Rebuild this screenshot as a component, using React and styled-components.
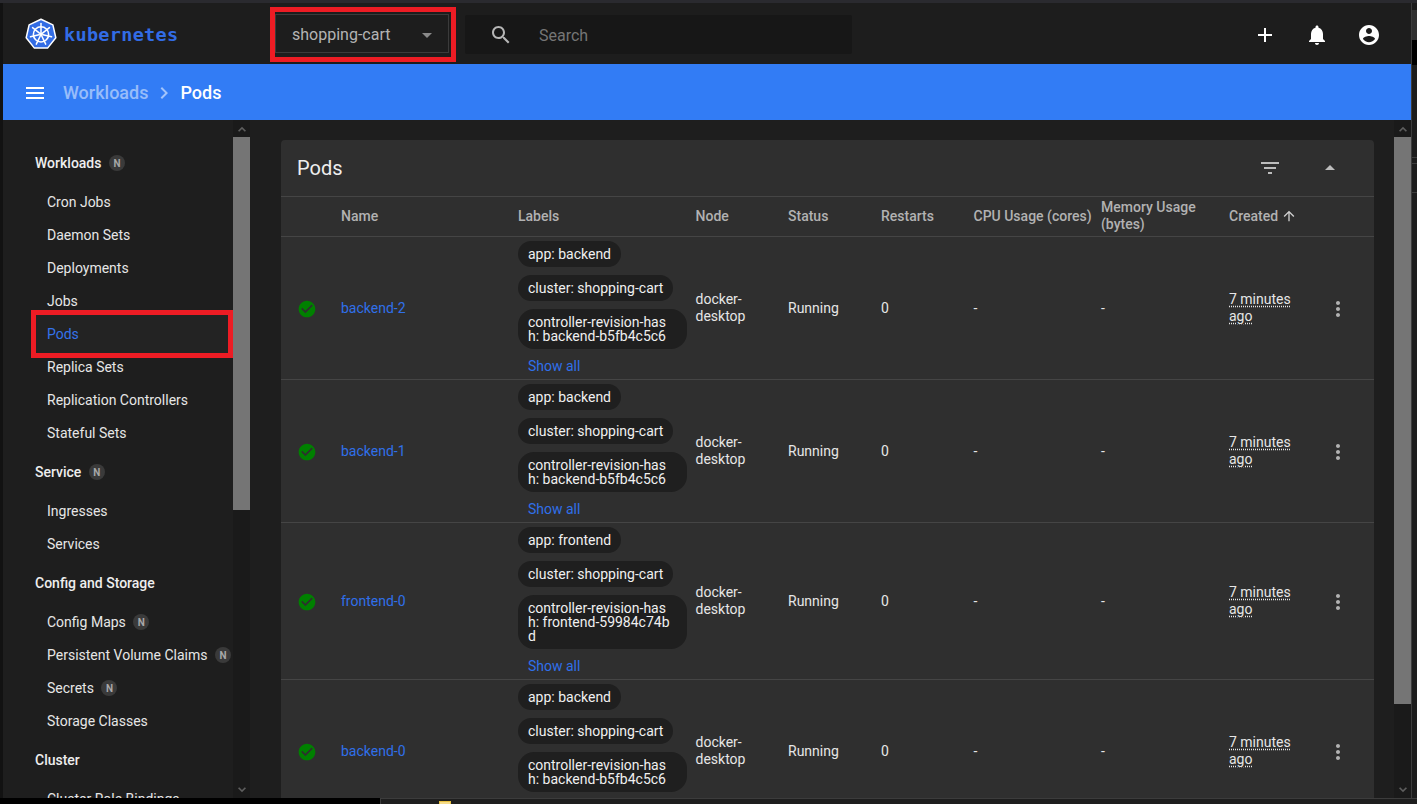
import React from "react";
import styled, { createGlobalStyle } from "styled-components";

const Global = createGlobalStyle`
  html, body { margin: 0; padding: 0; height: 100%; overflow: hidden; background: #000; }
  #root { height: 100%; }
  * { box-sizing: border-box; }
  body { font-family: Roboto, "Liberation Sans", sans-serif; font-size: 14px; }
`;

const P = {
  add: "M19 13h-6v6h-2v-6H5v-2h6V5h2v6h6v2z",
  bell: "M12 22c1.1 0 2-.9 2-2h-4c0 1.1.89 2 2 2zm6-6v-5c0-3.07-1.64-5.64-4.5-6.32V4c0-.83-.67-1.5-1.5-1.5s-1.5.67-1.5 1.5v.68C7.63 5.36 6 7.92 6 11v5l-2 2v1h16v-1l-2-2z",
  account: "M12 2C6.48 2 2 6.48 2 12s4.48 10 10 10 10-4.48 10-10S17.52 2 12 2zm0 3c1.66 0 3 1.34 3 3s-1.34 3-3 3-3-1.34-3-3 1.34-3 3-3zm0 14.2c-2.5 0-4.71-1.28-6-3.22.03-1.99 4-3.08 6-3.08 1.99 0 5.97 1.09 6 3.08-1.29 1.94-3.5 3.22-6 3.22z",
  menu: "M3 18h18v-2H3v2zm0-5h18v-2H3v2zm0-7v2h18V6H3z",
  search: "M15.5 14h-.79l-.28-.27C15.41 12.59 16 11.11 16 9.5 16 5.91 13.09 3 9.5 3S3 5.91 3 9.5 5.91 16 9.5 16c1.61 0 3.09-.59 4.23-1.57l.27.28v.79l5 4.99L20.49 19l-4.99-5zm-6 0C7.01 14 5 11.99 5 9.5S7.01 5 9.5 5 14 7.01 14 9.5 11.99 14 9.5 14z",
  chevron: "M10 6L8.59 7.41 13.17 12l-4.58 4.59L10 18l6-6z",
  filter: "M10 18h4v-2h-4v2zM3 6v2h18V6H3zm3 7h12v-2H6v2z",
  dropUp: "M7 14l5-5 5 5z",
  dropDown: "M7 10l5 5 5-5z",
  arrowUp: "M4 12l1.41 1.41L11 7.83V20h2V7.83l5.58 5.59L20 12l-8-8-8 8z",
  more: "M12 8c1.1 0 2-.9 2-2s-.9-2-2-2-2 .9-2 2 .9 2 2 2zm0 2c-1.1 0-2 .9-2 2s.9 2 2 2 2-.9 2-2-.9-2-2-2zm0 6c-1.1 0-2 .9-2 2s.9 2 2 2 2-.9 2-2-.9-2-2-2z",
  check: "M12 2C6.48 2 2 6.48 2 12s4.48 10 10 10 10-4.48 10-10S17.52 2 12 2zm-2 15l-5-5 1.41-1.41L10 14.17l7.59-7.59L19 8l-9 9z",
  scrollUp: "M6 14.5l6-6 6 6-1.8 1.8L12 12.1l-4.2 4.2z",
  scrollDown: "M6 9.5l6 6 6-6-1.8-1.8L12 11.9 7.8 7.7z",
};

const Svg = styled.svg`
  display: block;
  flex: none;
  fill: ${(p) => p.$color || "currentColor"};
`;
const Icon = ({ d, size = 24, color }) => (
  <Svg viewBox="0 0 24 24" width={size} height={size} $color={color}>
    <path d={d} />
  </Svg>
);

const polar = (r, i, n = 7) => {
  const a = (-90 + (360 / n) * i) * (Math.PI / 180);
  return [16 + r * Math.cos(a), 16.4 + r * Math.sin(a)];
};
const KubeLogo = () => (
  <svg viewBox="0 0 32 32" width="32" height="32" style={{ display: "block", flex: "none" }}>
    <polygon
      points={[0, 1, 2, 3, 4, 5, 6].map((i) => polar(15.2, i).join(",")).join(" ")}
      fill="#326ce5"
      stroke="#fff"
      strokeWidth="1.5"
      strokeLinejoin="round"
    />
    <circle cx="16" cy="16.4" r="7.6" fill="none" stroke="#fff" strokeWidth="1.6" />
    <circle cx="16" cy="16.4" r="1.8" fill="#fff" />
    {[0, 1, 2, 3, 4, 5, 6].map((i) => {
      const [x, y] = polar(10.8, i);
      const [a, b] = polar(2, i);
      return <line key={i} x1={a} y1={b} x2={x} y2={y} stroke="#fff" strokeWidth="1.5" strokeLinecap="round" />;
    })}
  </svg>
);

const Desktop = styled.div`
  height: 804px;
  width: 1417px;
  display: flex;
  flex-direction: column;
  background: #000;
  overflow: hidden;
`;
const TopStrip = styled.div`
  height: 3px;
  flex: none;
  background: #2a2a2f;
`;
const Middle = styled.div`
  display: flex;
  height: 795px;
  flex: none;
`;
const LeftEdge = styled.div`
  width: 3px;
  flex: none;
  background: #121212;
`;
const RightEdge = styled.div`
  flex: 1;
  border-left: 1px solid #3c3c3c;
  display: flex;
  flex-direction: column;
  background: #1c1c1c;
`;
const EdgeBlock = styled.div`
  height: ${(p) => p.$h}px;
  flex: none;
  background: ${(p) => p.$bg};
  border-bottom: ${(p) => (p.$line ? "1px solid #3c3c3c" : "none")};
`;
const BottomStrip = styled.div`
  flex: 1;
  display: flex;
`;
const BottomBlack = styled.div`
  width: 380px;
  background: #000;
`;
const Taskbar = styled.div`
  flex: 1;
  background: #1e1e1e;
  border-top: 1px solid #3c3c3c;
  border-left: 1px solid #3c3c3c;
  padding: 2px 0 0 58px;
`;
const TrayIcon = styled.div`
  width: 12px;
  height: 3px;
  background: #f5dc8a;
  border: 1px solid #e8c040;
  border-bottom: 0;
`;

const Window = styled.div`
  width: 1408px;
  flex: none;
  display: flex;
  flex-direction: column;
  background: #1e1e1e;
  color: #e8e8e8;
`;
const Toolbar = styled.header`
  height: 61px;
  flex: none;
  display: flex;
  align-items: center;
  background: #1d1d1d;
  padding: 2px 30px 0 22px;
`;
const Brand = styled.div`
  display: flex;
  align-items: center;
  width: 250px;
  gap: 7px;
  flex: none;
  margin-top: -1px;
`;
const Wordmark = styled.span`
  font-family: "DejaVu Sans Mono", "Liberation Mono", monospace;
  font-weight: 700;
  font-size: 18.5px;
  letter-spacing: 0.3px;
  color: #326ce5;
`;
const NamespaceSelect = styled.div`
  position: relative;
  width: 174px;
  height: 39px;
  flex: none;
  display: flex;
  align-items: center;
  justify-content: space-between;
  margin: -2px 16px 0 0;
  padding: 2px 9px 0 16px;
  border: 1px solid #3b3b3b;
  font-size: 16px;
  color: #b4b4b4;
`;
const Highlight = styled.div`
  position: absolute;
  top: ${(p) => p.$t}px;
  bottom: ${(p) => p.$b}px;
  left: ${(p) => p.$l}px;
  right: ${(p) => p.$r}px;
  border: 5px solid #ed1c24;
  background: ${(p) => p.$fill || "transparent"};
  pointer-events: none;
`;
const SearchBox = styled.div`
  width: 387px;
  height: 39px;
  flex: none;
  display: flex;
  align-items: center;
  background: #171717;
  border-radius: 2px;
  padding-left: 24px;
  color: #b6b6b6;
  font-size: 16px;
`;
const SearchHint = styled.span`
  margin-left: 26px;
  padding-top: 2px;
  color: #757575;
`;
const ToolActions = styled.div`
  margin-left: auto;
  display: flex;
  gap: 28px;
  color: #fff;
`;
const ActionBar = styled.div`
  height: 56px;
  flex: none;
  display: flex;
  align-items: center;
  background: #327cf5;
  padding: 1px 0 0 20px;
  color: #fff;
`;
const Crumb = styled.span`
  font-size: 18px;
  font-weight: 500;
  color: ${(p) => (p.$current ? "#fff" : "rgba(255,255,255,.5)")};
`;
const CrumbSep = styled.span`
  color: rgba(255, 255, 255, 0.55);
  margin: 0 4px;
`;
const MenuButton = styled.span`
  margin-right: 16px;
`;
const Body = styled.div`
  flex: 1;
  min-height: 0;
  display: flex;
`;
const Sidebar = styled.aside`
  width: 247px;
  flex: none;
  display: flex;
  background: #1e1e1e;
`;
const NavScroll = styled.nav`
  flex: 1;
  overflow: hidden;
  padding-top: 20px;
`;
const NavTitle = styled.div`
  height: 45px;
  display: flex;
  align-items: center;
  padding-left: 32px;
  font-weight: 500;
  color: #eeeeee;
`;
const NavItem = styled.div`
  position: relative;
  height: 33px;
  display: flex;
  align-items: center;
  padding-left: 44px;
  color: ${(p) => (p.$active ? "#3070ea" : "#e6e6e6")};
  white-space: nowrap;
`;
const NewBadge = styled.span`
  width: 16px;
  height: 16px;
  margin: 1px 0 0 7.5px;
  border-radius: 50%;
  background: #3a3a3a;
  color: #a8a8a8;
  font-size: 10px;
  font-weight: 700;
  display: inline-flex;
  align-items: center;
  justify-content: center;
`;
const Scrollbar = styled.div`
  width: 17px;
  flex: none;
  display: flex;
  flex-direction: column;
  background: #1a1a1a;
  color: #5e5e5e;
`;
const ScrollArrow = styled.div`
  height: 17px;
  flex: none;
  display: flex;
  align-items: center;
  justify-content: center;
`;
const ScrollThumb = styled.div`
  height: ${(p) => p.$h}px;
  flex: none;
  background: #757575;
`;
const ScrollRest = styled.div`
  flex: 1;
`;
const Content = styled.main`
  flex: 1;
  min-width: 0;
  overflow: hidden;
  padding: 20px 20px 0 31px;
`;
const Card = styled.section`
  background: #2f2f2f;
  border-radius: 4px 4px 0 0;
`;
const CardHead = styled.div`
  height: 57px;
  display: flex;
  align-items: center;
  padding: 0 32px 1px 16px;
  border-bottom: 1px solid #454545;
  color: #bdbdbd;
`;
const CardTitle = styled.h2`
  margin: 0 auto 0 0;
  font-size: 20px;
  font-weight: 400;
  color: #eeeeee;
`;
const CardActions = styled.div`
  display: flex;
  gap: 36px;
`;
const columns = "60px 177px 177.5px 92.5px 93px 92.5px 127.5px 128px 89px 56px";
const HeadRow = styled.div`
  display: grid;
  grid-template-columns: ${columns};
  align-items: center;
  height: 40px;
  padding-bottom: 1px;
  border-bottom: 1px solid #454545;
  color: #b2b2b2;
  font-weight: 500;
  line-height: 17px;
`;
const HeadCell = styled.div`
  padding-right: 8px;
  display: flex;
  align-items: center;
  gap: 3px;
`;
const SortArrow = styled.span`
  color: #d0d0d0;
`;
const Row = styled.div`
  display: grid;
  grid-template-columns: ${columns};
  align-items: center;
  border-bottom: 1px solid #454545;
  line-height: 17px;
  color: #e6e6e6;
`;
const StatusCell = styled.div`
  padding: 2px 0 0 16px;
`;
const Cell = styled.div`
  padding-right: 8px;
`;
const PodLink = styled.a`
  color: #3070ea;
`;
const Labels = styled.div`
  display: flex;
  flex-direction: column;
  align-items: flex-start;
  gap: 8px;
  padding: 4px 0 3px;
`;
const Chip = styled.span`
  max-width: 169px;
  padding: 6px 10px;
  border-radius: 16px;
  background: #1f1f1f;
  color: #f0f0f0;
  line-height: 14px;
  word-break: break-all;
`;
const ShowAll = styled.a`
  color: #3070ea;
  padding-left: 10px;
  line-height: 20px;
  margin-top: -1px;
`;
const TimeAgo = styled.span`
  text-decoration: underline dotted;
  text-underline-offset: 2px;
  color: #e6e6e6;
`;
const RowAction = styled.div`
  padding: 2px 0 0 8px;
  color: #b2b2b2;
`;

const nav = [
  { title: "Workloads", n: true, items: [
    { t: "Cron Jobs" }, { t: "Daemon Sets" }, { t: "Deployments" }, { t: "Jobs" },
    { t: "Pods", active: true }, { t: "Replica Sets" }, { t: "Replication Controllers" }, { t: "Stateful Sets" },
  ] },
  { title: "Service", n: true, items: [{ t: "Ingresses" }, { t: "Services" }] },
  { title: "Config and Storage", items: [
    { t: "Config Maps", n: true }, { t: "Persistent Volume Claims", n: true }, { t: "Secrets", n: true }, { t: "Storage Classes" },
  ] },
  { title: "Cluster", items: [{ t: "Cluster Role Bindings" }] },
];

const pods = [
  { name: "backend-2", app: "backend", hash: "backend-b5fb4c5c6" },
  { name: "backend-1", app: "backend", hash: "backend-b5fb4c5c6" },
  { name: "frontend-0", app: "frontend", hash: "frontend-59984c74bd" },
  { name: "backend-0", app: "backend", hash: "backend-b5fb4c5c6" },
];

const heads = ["", "Name", "Labels", "Node", "Status", "Restarts", "CPU Usage (cores)", "Memory Usage (bytes)"];

const VScroll = ({ thumb }) => (
  <Scrollbar>
    <ScrollArrow><Icon d={P.scrollUp} size={16} /></ScrollArrow>
    <ScrollThumb $h={thumb} />
    <ScrollRest />
    <ScrollArrow><Icon d={P.scrollDown} size={16} /></ScrollArrow>
  </Scrollbar>
);

export default function App() {
  return (
    <>
      <Global />
      <Desktop>
        <TopStrip />
        <Middle>
          <LeftEdge />
          <Window>
            <Toolbar>
              <Brand>
                <KubeLogo />
                <Wordmark>kubernetes</Wordmark>
              </Brand>
              <NamespaceSelect>
                shopping-cart
                <Icon d={P.dropDown} color="#8a8a8a" />
                <Highlight $t={-8} $b={-10} $l={-6} $r={-8} />
              </NamespaceSelect>
              <SearchBox>
                <Icon d={P.search} />
                <SearchHint>Search</SearchHint>
              </SearchBox>
              <ToolActions>
                <Icon d={P.add} />
                <Icon d={P.bell} />
                <Icon d={P.account} />
              </ToolActions>
            </Toolbar>
            <ActionBar>
              <MenuButton><Icon d={P.menu} /></MenuButton>
              <Crumb>Workloads</Crumb>
              <CrumbSep><Icon d={P.chevron} /></CrumbSep>
              <Crumb $current>Pods</Crumb>
            </ActionBar>
            <Body>
              <Sidebar>
                <NavScroll>
                  {nav.map((g) => (
                    <React.Fragment key={g.title}>
                      <NavTitle>
                        {g.title}
                        {g.n && <NewBadge>N</NewBadge>}
                      </NavTitle>
                      {g.items.map((it) => (
                        <NavItem key={it.t} $active={it.active}>
                          {it.t}
                          {it.n && <NewBadge>N</NewBadge>}
                          {it.active && <Highlight $t={-7} $b={-8} $l={28} $r={0} $fill="rgba(255,255,255,.025)" />}
                        </NavItem>
                      ))}
                    </React.Fragment>
                  ))}
                </NavScroll>
                <VScroll thumb={373} />
              </Sidebar>
              <Content>
                <Card>
                  <CardHead>
                    <CardTitle>Pods</CardTitle>
                    <CardActions>
                      <Icon d={P.filter} />
                      <Icon d={P.dropUp} />
                    </CardActions>
                  </CardHead>
                  <HeadRow>
                    {heads.map((h, i) => <HeadCell key={i}>{h}</HeadCell>)}
                    <HeadCell>Created <SortArrow><Icon d={P.arrowUp} size={16} /></SortArrow></HeadCell>
                    <HeadCell />
                  </HeadRow>
                  {pods.map((p) => (
                    <Row key={p.name}>
                      <StatusCell><Icon d={P.check} size={20} color="#008000" /></StatusCell>
                      <Cell><PodLink>{p.name}</PodLink></Cell>
                      <Labels>
                        <Chip>app: {p.app}</Chip>
                        <Chip>cluster: shopping-cart</Chip>
                        <Chip>controller-revision-hash: {p.hash}</Chip>
                        <ShowAll>Show all</ShowAll>
                      </Labels>
                      <Cell>docker-desktop</Cell>
                      <Cell>Running</Cell>
                      <Cell>0</Cell>
                      <Cell>-</Cell>
                      <Cell>-</Cell>
                      <Cell><TimeAgo>7 minutes ago</TimeAgo></Cell>
                      <RowAction><Icon d={P.more} /></RowAction>
                    </Row>
                  ))}
                </Card>
              </Content>
              <VScroll thumb={567} />
            </Body>
          </Window>
          <RightEdge>
            <EdgeBlock $h={7} $bg="#1c1c1c" />
            <EdgeBlock $h={30} $bg="#303030" />
            <EdgeBlock $h={25} $bg="#000" />
            <EdgeBlock $h={93} $bg="#1c1c1c" $line />
            <EdgeBlock $h={6} $bg="#1c1c1c" $line />
            <EdgeBlock $h={29} $bg="#1c1c1c" $line />
          </RightEdge>
        </Middle>
        <BottomStrip>
          <BottomBlack />
          <Taskbar><TrayIcon /></Taskbar>
        </BottomStrip>
      </Desktop>
    </>
  );
}
